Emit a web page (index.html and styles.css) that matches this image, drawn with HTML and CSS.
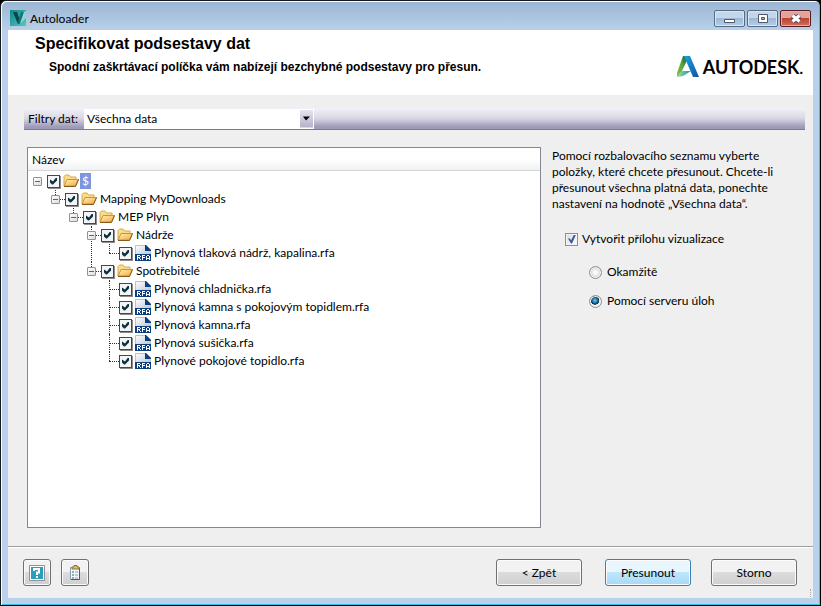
FILE: index.html
```html
<!DOCTYPE html>
<html lang="cs">
<head>
<meta charset="utf-8">
<title>Autoloader</title>
<link rel="stylesheet" href="styles.css">
</head>
<body>
<svg width="0" height="0" class="defs" aria-hidden="true">
  <defs>
    <linearGradient id="gFold" x1="0" y1="0" x2="1" y2="1"><stop offset="0" stop-color="#fff3bc"/><stop offset="1" stop-color="#f0a83c"/></linearGradient>
    <linearGradient id="gPage" x1="0" y1="0" x2="1" y2="1"><stop offset="0" stop-color="#ffffff"/><stop offset="1" stop-color="#b9c6d2"/></linearGradient>
    <linearGradient id="gLeft" x1="0" y1="1" x2="1" y2="0"><stop offset="0" stop-color="#8cc63f"/><stop offset=".5" stop-color="#5aa33c"/><stop offset="1" stop-color="#0d4a3a"/></linearGradient>
    <linearGradient id="gRight" x1="0" y1="0" x2="1" y2="1"><stop offset="0" stop-color="#12a5e0"/><stop offset="1" stop-color="#1b4fa8"/></linearGradient>
    <linearGradient id="gFoot" x1="0" y1="0" x2="1" y2="0"><stop offset="0" stop-color="#9fd8b0"/><stop offset="1" stop-color="#0e9a9a"/></linearGradient>
    <linearGradient id="gApp" x1="0" y1="0" x2="1" y2="1"><stop offset="0" stop-color="#0b8a8c"/><stop offset="1" stop-color="#5cc4bc"/></linearGradient>
    <symbol id="folder" viewBox="0 0 16 14">
      <path d="M1 12V2.500L2.500 1H6l1.500 2H13v3" fill="#f9de8a" stroke="#d9a84c"/>
      <path d="M1 12 4 5.500h11.500L12.500 12z" fill="url(#gFold)" stroke="#d09038"/>
      <path d="M1 12.500h11.500l3-7" fill="none" stroke="#8a5a1c"/>
    </symbol>
    <symbol id="rfa" viewBox="0 0 16 16">
      <path d="M.5 9V.5h10.500L15.500 5v5" fill="url(#gPage)" stroke="#b4c3cf"/>
      <path d="M10 0h1l5 5v1h-6z" fill="#0d3f7e"/>
      <path d="M0 9h16v7H0z" fill="#0d3f7e"/>
      <path d="M2 10h3v1H2zM2 10h1v5H2zM5 11h1v1H5zM2 12h3v1H2zM4 13h1v1H4zM5 14h1v1H5zM7 10h1v5H7zM7 10h3v1H7zM7 12h3v1H7zM11 11h1v4h-1zM12 10h2v1h-2zM14 11h1v4h-1zM11 13h4v1h-4z" fill="#fff"/>
    </symbol>
  </defs>
</svg>
<div class="window">
  <header class="titlebar">
    <svg class="appicon" viewBox="0 0 16 16" aria-hidden="true"><path d="M0 0h16v16H0z" fill="url(#gApp)"/><path d="M3 2h4l2 6 2-6h3l-4 12H8z" fill="#0a7a80"/><path d="M3 2h4l2 6-1 6z" fill="#0a454d"/><path d="m14 2 2-1v7l-6 6z" fill="#8fd8d0"/></svg>
    <span class="title">Autoloader</span>
    <div class="winbtns">
      <button class="winbtn" aria-label="Minimalizovat"><svg viewBox="0 0 12 10"><path d="M.5 5.500h10v3H.5z" fill="#fff" stroke="#535666"/></svg></button>
      <button class="winbtn" aria-label="Maximalizovat"><svg viewBox="0 0 12 10"><path d="M1.500.5h9v8h-9z" fill="#fff" stroke="#535666"/><path d="M4.500 3.500h3v2h-3z" fill="#9db8d6" stroke="#535666"/></svg></button>
      <button class="winbtn close" aria-label="Zavřít"><svg viewBox="0 0 12 10"><path d="m2.500 1.500 7 6m0-6-7 6" stroke="#5c4a58" stroke-width="5"/><path d="m2.500 1.500 7 6m0-6-7 6" stroke="#fff" stroke-width="3"/></svg></button>
    </div>
  </header>
  <div class="client">
    <section class="banner">
      <div>
        <h1>Specifikovat podsestavy dat</h1>
        <p>Spodní zaškrtávací políčka vám nabízejí bezchybné podsestavy pro přesun.</p>
      </div>
      <div class="brand">
        <svg viewBox="0 0 22 22" aria-hidden="true"><path d="M0 17 6 0h6L5 15l-5 6z" fill="url(#gLeft)"/><path d="M7 0h6l9 21h-6z" fill="url(#gRight)"/><path d="M0 21 5 15h9l-8 5z" fill="url(#gFoot)"/></svg>
        <span>AUTODESK<small>.</small></span>
      </div>
    </section>
    <div class="filter">
      <label for="filter">Filtry dat:</label>
      <div class="combo"><select id="filter"><option>Všechna data</option></select></div>
    </div>
    <main class="main">
      <section class="treebox">
        <div class="colhead">Název</div>
        <ul class="tree">
          <li><div class="row"><button class="exp" aria-label="Sbalit"></button><input type="checkbox" checked id="a0"><svg class="fi"><use href="#folder"/></svg><label for="a0" class="sel">$</label></div>
          <ul>
            <li><div class="row"><button class="exp" aria-label="Sbalit"></button><input type="checkbox" checked id="a1"><svg class="fi"><use href="#folder"/></svg><label for="a1">Mapping MyDownloads</label></div>
            <ul>
              <li><div class="row"><button class="exp" aria-label="Sbalit"></button><input type="checkbox" checked id="a2"><svg class="fi"><use href="#folder"/></svg><label for="a2">MEP Plyn</label></div>
              <ul>
                <li><div class="row"><button class="exp" aria-label="Sbalit"></button><input type="checkbox" checked id="a3"><svg class="fi"><use href="#folder"/></svg><label for="a3">Nádrže</label></div>
                <ul>
                  <li><div class="row leaf"><input type="checkbox" checked id="b1"><svg class="rf"><use href="#rfa"/></svg><label for="b1">Plynová tlaková nádrž, kapalina.rfa</label></div></li>
                </ul></li>
                <li><div class="row"><button class="exp" aria-label="Sbalit"></button><input type="checkbox" checked id="a4"><svg class="fi"><use href="#folder"/></svg><label for="a4">Spotřebitelé</label></div>
                <ul>
                  <li><div class="row leaf"><input type="checkbox" checked id="b2"><svg class="rf"><use href="#rfa"/></svg><label for="b2">Plynová chladnička.rfa</label></div></li>
                  <li><div class="row leaf"><input type="checkbox" checked id="b3"><svg class="rf"><use href="#rfa"/></svg><label for="b3">Plynová kamna s pokojovým topidlem.rfa</label></div></li>
                  <li><div class="row leaf"><input type="checkbox" checked id="b4"><svg class="rf"><use href="#rfa"/></svg><label for="b4">Plynová kamna.rfa</label></div></li>
                  <li><div class="row leaf"><input type="checkbox" checked id="b5"><svg class="rf"><use href="#rfa"/></svg><label for="b5">Plynová sušička.rfa</label></div></li>
                  <li><div class="row leaf"><input type="checkbox" checked id="b6"><svg class="rf"><use href="#rfa"/></svg><label for="b6">Plynové pokojové topidlo.rfa</label></div></li>
                </ul></li>
              </ul></li>
            </ul></li>
          </ul></li>
        </ul>
      </section>
      <aside class="side">
        <p>Pomocí rozbalovacího seznamu vyberte<br>položky, které chcete přesunout. Chcete-li<br>přesunout všechna platná data, ponechte<br>nastavení na hodnotě „Všechna data“.</p>
        <label class="opt"><input type="checkbox" class="vis" checked>Vytvořit přílohu vizualizace</label>
        <label class="opt sub"><input type="radio" name="when">Okamžitě</label>
        <label class="opt sub"><input type="radio" name="when" checked>Pomocí serveru úloh</label>
      </aside>
    </main>
    <footer class="footer">
      <button class="btn icon" aria-label="Nápověda"><svg viewBox="0 0 16 16"><path d="M.5.5h15v15H.5z" fill="#fff" stroke="#8d9298"/><path d="M2 2h12v12H2z" fill="#2b9dbd"/><path d="M5 6V4h5v3.500H8V10" fill="none" stroke="#fff" stroke-width="2"/><path d="M7 11h2v2H7z" fill="#fff"/></svg></button>
      <button class="btn icon" aria-label="Zpráva"><svg viewBox="0 0 16 16"><path d="M3.500 2.500h9v12h-9z" fill="#f2f6fb" stroke="#8e9abf"/><path d="M12.500 3v11.500H4" fill="none" stroke="#4a567d"/><path d="M5 4V2h2V.5h3V2h2v2z" fill="#d8c070" stroke="#8a7436"/><path d="M5 7h2M5 10h2M5 13h2" stroke="#86bd90" stroke-width="2"/><path d="M8 7h3M8 10h3M8 13h3" stroke="#8c9ccc"/></svg></button>
      <span class="grow"></span>
      <button class="btn">&lt; Zpět</button>
      <button class="btn primary">Přesunout</button>
      <button class="btn">Storno</button>
      <span class="grip"></span>
    </footer>
  </div>
</div>
</body>
</html>
```
FILE: styles.css
```css
* { box-sizing: border-box; }
body { margin: 0; background: #000; font: 12px/16px Lato, "Noto Sans", sans-serif; color: #000; }
h1, p, ul { margin: 0; padding: 0; }
ul { list-style: none; }
button, input, select { font: inherit; color: inherit; margin: 0; padding: 0; }
.defs { position: absolute; }
.window { min-height: 100vh; display: flex; flex-direction: column; padding: 1px 7px 7px; border: 1px solid #16181c; border-right-color: #000; border-bottom-color: #000; border-radius: 6px 6px 0 0; background: linear-gradient(#9bb5d3, #b9d1ea 30px); box-shadow: inset 1px 1px #fff, inset -1px -1px #35c5e0; }
.titlebar { display: flex; height: 28px; padding: 0 2px; align-items: center; }
.appicon { width: 16px; height: 16px; margin-top: 4px; }
.title { margin: 5px auto 0 4px; }
.winbtns { display: flex; gap: 2px; margin-top: 5px; }
.winbtn { width: 31px; height: 17px; border: 1px solid #566a86; border-radius: 2px; background: linear-gradient(#c3d6ea 45%, #9db8d6 50%, #b5cfe9); box-shadow: inset 0 0 0 1px #d9e6f4; display: flex; align-items: center; justify-content: center; }
.winbtn svg { width: 12px; height: 10px; }
.winbtn.close { border-color: #5a1820; background: linear-gradient(#e0a49c 45%, #bb4433 50%, #cf705a); box-shadow: inset 0 0 0 1px #e6b0a6; }
.client { flex: 1; display: flex; flex-direction: column; background: #efefef; }
.banner { display: flex; justify-content: space-between; height: 65px; background: #fff; padding: 4px 10px 0 27px; font-family: "Liberation Sans", Arial, sans-serif; }
h1 { font-size: 16px; line-height: 20px; font-weight: bold; }
.banner p { font-size: 12px; font-weight: bold; margin: 5px 0 0 14px; }
.brand { display: flex; gap: 4px; height: 22px; align-items: center; margin-top: 22px; font: bold 18px/22px Lato, sans-serif; }
.brand svg { width: 22px; height: 22px; }
.filter { display: flex; align-items: center; margin: 13px 8px 0 16px; height: 22px; padding-left: 4px; background: linear-gradient(#f2f2f8, #d8d6e4 50%, #9f9ab8 90%); border-bottom: 1px solid #7b7896; }
.filter label { width: 56px; }
.combo { position: relative; width: 230px; height: 20px; background: #fff; }
.combo select { appearance: none; width: 100%; height: 20px; border: 0; padding-left: 3px; background: #fff; }
.combo::after { content: ""; position: absolute; pointer-events: none; right: 1px; top: 1px; width: 13px; height: 18px; background: linear-gradient(#e6e5f0, #b3b0c8); clip-path: polygon(evenodd, 0 0, 100% 0, 100% 100%, 0 100%, 0 0, 3px 7px, 10px 7px, 6px 11px, 3px 7px); }
.combo::before { content: ""; position: absolute; right: 3px; top: 7px; width: 9px; height: 5px; background: #000; pointer-events: none; }
.main { flex: 1; display: flex; margin: 17px 8px 18px 19px; gap: 11px; }
.treebox { flex: 1; max-width: 514px; border: 1px solid #828790; background: #fff; }
.colhead { height: 23px; padding: 4px; border-bottom: 1px solid #d5d5d5; background: linear-gradient(#fff 50%, #f1f2f4); }
.tree { padding: 1px 0 0 5px; }
.tree ul { padding-left: 18px; }
.tree li { position: relative; }
.row { display: flex; height: 18px; align-items: center; position: relative; }
.exp { width: 9px; height: 9px; margin-right: 5px; border: 1px solid #919191; border-radius: 1px; background: linear-gradient(#4b63a7, #4b63a7) center / 5px 1px no-repeat, linear-gradient(135deg, #fff, #ddd); position: relative; z-index: 1; }
.row.leaf { padding-left: 14px; }
.tree input { appearance: none; width: 13px; height: 13px; margin-right: 3px; border: 1px solid #1c5180; background: #f4f4f4; box-shadow: 1px 1px #8d8d8d; position: relative; }
.tree svg { width: 16px; height: 16px; margin-right: 3px; }
.tree svg.fi { height: 14px; }
.tree input:checked::after { content: ""; position: absolute; left: 2px; top: 2px; width: 8px; height: 8px; background: #0c3040; clip-path: polygon(0 2px, 3px 4px, 6px 0, 7px 0, 7px 3px, 3px 7px, 2px 7px, 0 5px); }
.sel { background: #7a96df; color: #fff; padding: 0 2px; }
.row > .sel { margin-left: -2px; }
.tree ul > li > .row::before { content: ""; position: absolute; left: 4px; top: 9px; width: 10px; border-top: 1px dotted #333; }
.tree ul > li::before { content: ""; position: absolute; left: 4px; top: 0; height: 100%; border-left: 1px dotted #333; }
.tree ul > li:last-child::before { height: 9px; }
.side { padding-top: 1px; }
.opt { display: flex; align-items: center; height: 16px; margin: 19px 0 0 13px; }
.opt.sub { margin: 17px 0 0 37px; }
.opt.sub + .opt.sub { margin-top: 13px; }
.opt input { appearance: none; width: 13px; height: 13px; margin-right: 4px; position: relative; }
.vis { border: 1px solid #8e8f8f; background: linear-gradient(135deg, #d5dae0, #fff); box-shadow: inset 0 0 0 1px #f4f4f4; }
.vis:checked::after { content: ""; position: absolute; left: 2px; top: 1px; width: 8px; height: 9px; background: #3f55a0; clip-path: polygon(0 4px, 2px 4px, 3px 6px, 6px 0, 8px 0, 4px 9px, 3px 9px); }
.opt input[type=radio] { border: 1px solid #8e8f8f; border-radius: 50%; background: radial-gradient(#fafafa 20%, #ccd0d4 70%); box-shadow: inset 0 0 0 1px #f4f4f4; margin-right: 5px; }
.opt input[type=radio]:checked { background: radial-gradient(circle at 45% 40%, #6fd0f5, #14578c 35%, #0b2a48 45%, #e8edf0 50%); }
.footer { display: flex; height: 52px; padding: 12px 8px 0 15px; border-top: 1px solid #a0a0a0; box-shadow: inset 0 1px #fff; position: relative; }
.grow { flex: 1; }
.btn { width: 86px; height: 27px; margin-right: 8px; border: 1px solid #707070; border-radius: 3px; background: linear-gradient(#f2f2f2 48%, #dcdcdc 50%, #cfcfcf); box-shadow: inset 0 0 0 1px #fbfbfb; }
.btn.icon { width: 28px; margin-right: 10px; display: flex; align-items: center; justify-content: center; }
.btn.icon svg { width: 16px; height: 16px; }
.btn.primary { margin: 0 20px 0 15px; border-color: #3c7fb1; background: linear-gradient(#eaf6fd 48%, #bee6fd 50%, #a7d9f5); }
.grip { position: absolute; right: 2px; bottom: 1px; height: 8px; border-left: 1px dotted #aaa; }
```
